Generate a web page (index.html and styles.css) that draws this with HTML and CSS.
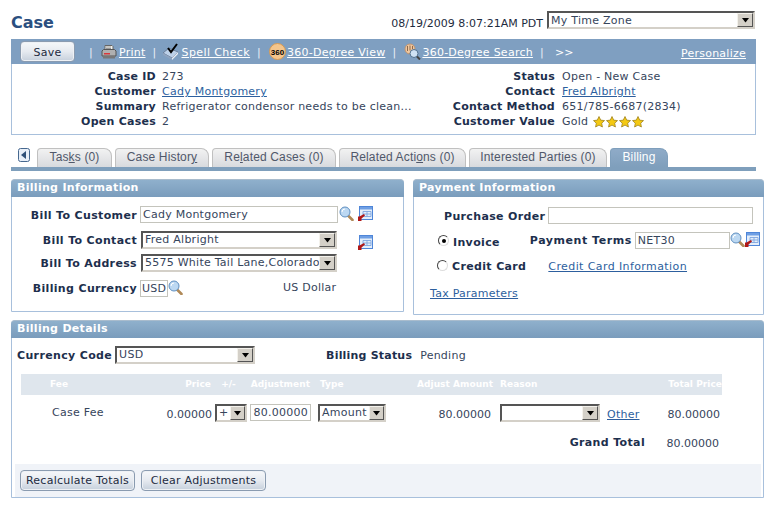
FILE: index.html
```html
<!DOCTYPE html>
<html lang="en">
<head>
<meta charset="utf-8">
<title>Case</title>
<link rel="stylesheet" href="styles.css">
</head>
<body>
<svg class="defs" width="0" height="0" aria-hidden="true">
  <defs>
    <symbol id="mag" viewBox="0 0 15 15">
      <path d="M9 9.500l4.500 4.500" stroke="#b08a58" stroke-width="2.600" stroke-linecap="round"/>
      <circle cx="6" cy="6" r="5" fill="#bcd8f2" stroke="#5f8fc0"/>
      <path d="M3 6a3 3 0 0 1 3-3" stroke="#fff" fill="none"/>
    </symbol>
    <symbol id="lookup" viewBox="0 0 15 15">
      <rect x="1.500" y=".5" width="13" height="13" fill="#e4eefa" stroke="#4f86d8"/>
      <rect x="2" y="1" width="12" height="2.500" fill="#6f9fe4"/>
      <path d="M5 5.500h8v5h-8zM5 8h8M9 5.500v5" fill="none" stroke="#7fa6e0" stroke-width=".9"/>
      <path d="M0 15V10.500h1.500L6 8l1 1.500L3.500 12.500V15z" fill="#b01818"/>
    </symbol>
    <symbol id="star" viewBox="0 0 12 12">
      <path d="M6 .5l1.700 3.600 3.800.5-2.800 2.600.7 3.800L6 9.100 2.600 11l.7-3.800L.5 4.600l3.800-.5z" fill="#f4c912" stroke="#a08320" stroke-width=".8"/>
    </symbol>
    <symbol id="arrow" viewBox="0 0 9 5">
      <path d="M1 0h7L4.500 4.500z" fill="#000"/>
    </symbol>
  </defs>
</svg>

<div class="page">
  <header class="titlebar">
    <h1 class="title">Case</h1>
    <div class="tz">
      <span class="stamp">08/19/2009 8:07:21AM PDT</span>
      <div class="sel sel-tz"><span class="sel-text">My Time Zone</span><span class="sel-btn"><svg width="9" height="5"><use href="#arrow"/></svg></span></div>
    </div>
  </header>

  <nav class="toolbar">
    <button class="btn btn-save" type="button">Save</button>
    <span class="sep first">|</span>
    <svg class="tool-ico" width="16" height="16" viewBox="0 0 16 16"><path d="M4 6V1.500h7l1 1V6z" fill="#f4f4ee" stroke="#666"/><path d="M5 3h5M5 4.500h5" stroke="#999"/><path d="M1 7l1.500-1.500h11L15 7v5H1z" fill="#b0b0b0" stroke="#555"/><rect x="3" y="9" width="6" height="1.500" fill="#d8383c"/><path d="M2 12h12v2.500H2z" fill="#777"/></svg>
    <a class="tool-link" href="#">Print</a>
    <span class="sep">|</span>
    <svg class="tool-ico ico-spell" width="18" height="18" viewBox="0 0 18 18"><path d="M1 10l6-5 9 4-6 6z" fill="#bcd0e8" stroke="#6b7f9a"/><path d="M1 10v2l9 5v-2z" fill="#8fa4c0"/><path d="M10 15v2l6-6V9z" fill="#e8eef6"/><path d="M6 5l3 4 6-8" fill="none" stroke="#000" stroke-width="2"/></svg>
    <a class="tool-link spell" href="#">Spell Check</a>
    <span class="sep">|</span>
    <svg class="tool-ico" width="17" height="17" viewBox="0 0 17 17"><circle cx="8.500" cy="8.500" r="8" fill="#f4c58c" stroke="#d69a54"/><text x="8.500" y="11.500" text-anchor="middle" class="ico-360">360</text></svg>
    <a class="tool-link tight" href="#">360-Degree View</a>
    <span class="sep">|</span>
    <svg class="tool-ico" width="17" height="17" viewBox="0 0 17 17"><circle cx="6" cy="6" r="5" fill="#f0c8a0" stroke="#c09470"/><path d="M3.500 3v5M6 2.500v5M8.500 3v3" stroke="#8f6a4a"/><circle cx="10" cy="10.500" r="4" fill="#cfe2f4" stroke="#50708f"/><path d="M13 13.500l3 3" stroke="#444" stroke-width="2"/></svg>
    <a class="tool-link tight" href="#">360-Degree Search</a>
    <span class="sep">|</span>
    <span class="more">&gt;&gt;</span>
    <a class="tool-link personalize" href="#">Personalize</a>
  </nav>

  <section class="summary">
    <dl class="kv kv-left">
      <dt>Case ID</dt><dd>273</dd>
      <dt>Customer</dt><dd><a href="#">Cady Montgomery</a></dd>
      <dt>Summary</dt><dd>Refrigerator condensor needs to be clean...</dd>
      <dt>Open Cases</dt><dd>2</dd>
    </dl>
    <dl class="kv kv-right">
      <dt>Status</dt><dd>Open - New Case</dd>
      <dt>Contact</dt><dd><a href="#">Fred Albright</a></dd>
      <dt>Contact Method</dt><dd>651/785-6687(2834)</dd>
      <dt>Customer Value</dt><dd class="stars">Gold <svg width="12" height="12"><use href="#star"/></svg><svg width="12" height="12"><use href="#star"/></svg><svg width="12" height="12"><use href="#star"/></svg><svg width="12" height="12"><use href="#star"/></svg></dd>
    </dl>
  </section>

  <div class="tabs">
    <span class="tab-back"><svg width="12" height="14" viewBox="0 0 12 14"><rect x=".5" y=".5" width="11" height="13" rx="2" fill="#e8eff8" stroke="#46688f"/><path d="M8 3v8L3 7z" fill="#2f5078"/></svg></span>
    <span class="tab t1">Tas<u>k</u>s (0)</span>
    <span class="tab t2">Case Histor<u>y</u></span>
    <span class="tab t3">Re<u>l</u>ated Cases (0)</span>
    <span class="tab t4">Related Acti<u>o</u>ns (0)</span>
    <span class="tab t5">Interested Parties (0)</span>
    <span class="tab active">Billing</span>
  </div>

  <div class="panels">
    <section class="panel p-billing">
      <h2 class="panel-head">Billing Information</h2>
      <div class="bill-grid">
        <label class="lbl r1">Bill To Customer</label>
        <div class="field r1"><span class="inp w-cust">Cady Montgomery</span><svg class="mag" width="15" height="15"><use href="#mag"/></svg><svg class="lk" width="15" height="15"><use href="#lookup"/></svg></div>
        <label class="lbl r2">Bill To Contact</label>
        <div class="field r2"><div class="sel w-contact"><span class="sel-text">Fred Albright</span><span class="sel-btn"><svg width="9" height="5"><use href="#arrow"/></svg></span></div><svg class="lk lk2" width="15" height="15"><use href="#lookup"/></svg></div>
        <label class="lbl r3">Bill To Address</label>
        <div class="field r3"><div class="sel w-contact"><span class="sel-text">5575 White Tail Lane,Colorado</span><span class="sel-btn"><svg width="9" height="5"><use href="#arrow"/></svg></span></div></div>
        <label class="lbl r4">Billing Currency</label>
        <div class="field r4"><span class="inp w-usd">USD</span><svg width="15" height="15"><use href="#mag"/></svg><span class="usd-name">US Dollar</span></div>
      </div>
    </section>

    <section class="panel p-payment">
      <h2 class="panel-head">Payment Information</h2>
      <div class="pay-body">
        <div class="pay-row po"><label class="lbl">Purchase Order</label><span class="inp w-po"></span></div>
        <div class="pay-row inv">
          <span class="radio on"></span><label class="lbl radio-l">Invoice</label>
          <label class="lbl terms">Payment Terms</label><span class="inp w-net">NET30</span><svg width="15" height="15"><use href="#mag"/></svg><svg width="15" height="15"><use href="#lookup"/></svg>
        </div>
        <div class="pay-row cc">
          <span class="radio"></span><label class="lbl radio-l">Credit Card</label>
          <a class="cc-link" href="#">Credit Card Information</a>
        </div>
        <div class="pay-row tax"><a href="#">Tax Parameters</a></div>
      </div>
    </section>
  </div>

  <section class="panel p-details">
    <h2 class="panel-head">Billing Details</h2>
    <div class="cur-row">
      <label class="lbl">Currency Code</label>
      <div class="sel w-cur"><span class="sel-text">USD</span><span class="sel-btn"><svg width="9" height="5"><use href="#arrow"/></svg></span></div>
      <label class="lbl status-l">Billing Status</label><span class="status-v">Pending</span>
    </div>
    <table class="fees">
      <colgroup>
        <col class="c-fee"><col class="c-price"><col class="c-sign"><col class="c-adj"><col class="c-type"><col class="c-amt"><col class="c-reason"><col class="c-total">
      </colgroup>
      <thead>
        <tr>
          <th class="l fee-h">Fee</th><th class="r price-h">Price</th><th class="c sign-h">+/-</th><th class="r adj-h">Adjustment</th><th class="l type-h">Type</th><th class="r amt-h">Adjust Amount</th><th class="l reason-h">Reason</th><th class="r">Total Price</th>
        </tr>
      </thead>
      <tbody>
        <tr class="row-fee">
          <td class="fee-name">Case Fee</td>
          <td class="r val">0.00000</td>
          <td class="ctl"><div class="sel w-sign"><span class="sel-text">+</span><span class="sel-btn"><svg width="9" height="5"><use href="#arrow"/></svg></span></div></td>
          <td class="ctl"><span class="inp w-adj">80.00000</span></td>
          <td class="ctl"><div class="sel w-type"><span class="sel-text">Amount</span><span class="sel-btn"><svg width="9" height="5"><use href="#arrow"/></svg></span></div></td>
          <td class="r val amt">80.00000</td>
          <td class="ctl"><div class="reason-cell"><div class="sel w-reason"><span class="sel-text"></span><span class="sel-btn"><svg width="9" height="5"><use href="#arrow"/></svg></span></div><a class="other" href="#">Other</a></div></td>
          <td class="r val tot">80.00000</td>
        </tr>
        <tr class="row-total">
          <td colspan="6"></td>
          <td class="gt">Grand Total</td>
          <td class="r gv">80.00000</td>
        </tr>
      </tbody>
    </table>
    <div class="actions">
      <button class="btn btn-a1" type="button">Recalculate Totals</button>
      <button class="btn btn-a2" type="button">Clear Adjustments</button>
    </div>
  </section>
</div>
</body>
</html>
```
FILE: styles.css
```css
* { box-sizing: border-box; }
html, body { margin: 0; padding: 0; background: #fff; }
body { font: 11px/15px "DejaVu Sans", Verdana, sans-serif; letter-spacing: .25px; color: #36455c; width: 774px; height: 505px; overflow: hidden; }
a { color: #2d5f9e; }
.defs { position: absolute; }
svg { display: block; flex: none; }
.page { padding-left: 11px; width: 774px; }

/* title */
.titlebar { height: 39px; width: 745px; display: flex; justify-content: space-between; }
.title { margin: 13px 0 0; font-size: 16px; line-height: 20px; font-weight: bold; letter-spacing: 0; color: #2b4f7f; }
.tz { display: flex; margin-top: 11px; align-items: flex-start; justify-content: flex-end; gap: 4px; padding-right: 1px; }
.stamp { font-size: 11px; line-height: 15px; letter-spacing: 0; margin-top: 5px; white-space: nowrap; color: #1d2b40; }

/* selects and inputs */
.sel { display: flex; justify-content: space-between; height: 18px; background: #fff; border: 2px solid; border-color: #555 #d4d0c8 #d4d0c8 #555; font-size: 11px; line-height: 14px; color: #36455c; overflow: hidden; white-space: nowrap; }
.sel-text { padding-left: 2px; overflow: hidden; }
.sel-btn { width: 16px; flex: none; background: #d4d0c8; border: 1px solid; border-color: #f4f2ec #555 #555 #f4f2ec; display: flex; align-items: center; justify-content: center; }
.sel-tz { width: 208px; }
.sel-tz .sel-text { padding-top: 1px; line-height: 13px; }
.inp { display: block; height: 17px; background: #fff; border: 1px solid #c4c4bc; padding: 0 2px; line-height: 16px; white-space: nowrap; overflow: hidden; color: #36455c; }

/* toolbar */
.toolbar { width: 745px; height: 25px; background: #7f9fc1; display: flex; align-items: center; color: #fff; padding-left: 9px; }
.tool-link { color: #fff; margin: 2px 0 0 2px; }
.tool-link.tight { margin-left: 1px; }
.tool-link.spell { letter-spacing: .4px; }
.sep { margin: 2px 8px 0 7px; color: #e8eef6; }
.sep.first { margin: 2px 8px 0 14px; }
.ico-spell { margin-left: -3px; }
.more { margin: 2px 0 0 3px; }
.personalize { margin-left: auto; margin-right: 10px; margin-top: 4px; }
.ico-360 { font: bold 8px "Liberation Sans", sans-serif; letter-spacing: 0; fill: #000; }
.btn { font: 11px/15px "DejaVu Sans", Verdana, sans-serif; letter-spacing: .25px; color: #1d2b40; border: 1px solid #8a9bb0; border-radius: 4px; background: linear-gradient(#f6f8fa 0%, #e6eaf0 50%, #c6d0dc 100%); padding: 1px 0 0; height: 21px; box-shadow: inset 0 0 0 1px #eef1f5; }
.btn-save { width: 55px; }

/* summary */
.summary { width: 745px; height: 71px; border: 1px solid #a8c0dc; border-top: 0; display: flex; padding-top: 5px; }
.kv { margin: 0; display: grid; grid-auto-rows: 15px; column-gap: 6px; align-content: start; }
.kv dt { font-weight: bold; letter-spacing: .25px; text-align: right; color: #1d2f4d; }
.kv dd { margin: 0; white-space: nowrap; }
.kv-left { grid-template-columns: 144px 1fr; width: 400px; }
.kv-right { grid-template-columns: 143px 1fr; column-gap: 7px; }
.stars { display: flex; align-items: center; gap: 1px; }
.stars svg:first-of-type { margin-left: 4px; }

/* tabs */
.tabs { width: 745px; height: 36px; padding: 13px 0 0 7px; display: flex; gap: 3px; border-bottom: 4px solid #7f9fbc; align-items: flex-end; font: 12px/14px "Liberation Sans", Arial, sans-serif; letter-spacing: .15px; }
.tab { height: 19px; display: block; padding: 1px 0 0; text-align: center; background: linear-gradient(#f2f2f2, #d8dade); border: 1px solid #c0c0c0; border-bottom: 0; border-radius: 4px 8px 0 0; color: #50586a; }
.tab-back { width: 12px; align-self: flex-start; margin: 0 4px 0 0; }
.t1 { width: 75px; } .t2 { width: 94px; } .t3 { width: 124px; } .t4 { width: 127px; } .t5 { width: 138px; }
.active { width: 58px; background: linear-gradient(#8fabc8, #7f9fbc); border-color: #7f9fbc; color: #fff; }

/* panels */
.panels { display: flex; gap: 9px; margin-top: 8px; align-items: flex-start; }
.panel { border: 1px solid #a8c0dc; border-radius: 4px 4px 0 0; background: #fff; }
.panel-head { margin: -1px -1px 0; height: 18px; font-size: 11px; line-height: 15px; font-weight: bold; letter-spacing: .3px; color: #fff; padding-left: 6px; background: linear-gradient(#8fb0cc, #7a9cbc); border-radius: 4px 4px 0 0; border-top: 1px solid #a9bccd; }
.lbl { font-weight: bold; letter-spacing: .35px; color: #1d2f4d; white-space: nowrap; }
.p-billing { width: 393px; height: 133px; }
.p-payment { width: 351px; height: 136px; }

.bill-grid { display: grid; grid-template-columns: 125px 1fr; column-gap: 3px; grid-template-rows: 25px 23px 26px 20px; padding-top: 9px; }
.bill-grid .lbl { text-align: right; padding-top: 2px; }
.bill-grid .lbl.r4 { padding-top: 1px; }
.field { display: flex; align-items: flex-start; position: relative; }
.field.r2, .field.r3 { padding-left: 1px; }
.w-cust { width: 198px; }
.mag { margin: 0 0 0 1px; }
.lk { margin-left: 4px; }
.lk2 { margin: 4px 0 0 21px; }
.w-contact { width: 196px; }
.w-usd { width: 28px; padding: 0 1px; }
.usd-name { margin-left: 100px; }

.pay-body { padding-top: 10px; position: relative; }
.pay-row { display: flex; align-items: flex-start; }
.po { height: 25px; padding-left: 30px; }
.po .lbl { margin-right: 3px; padding-top: 2px; }
.w-po { width: 205px; }
.inv { height: 27px; padding-left: 24px; }
.radio { width: 11px; height: 11px; border-radius: 50%; border: 1px solid; border-color: #444 #ddd #ddd #444; background: #fff; margin-top: 3px; position: relative; flex: none; }
.radio.on::after { content: ""; position: absolute; left: 3px; top: 3px; width: 4px; height: 4px; border-radius: 50%; background: #000; }
.radio-l { margin-left: 4px; padding-top: 3px; }
.terms { margin-left: 30px; margin-right: 3px; padding-top: 1px; letter-spacing: .55px; }
.w-net { width: 95px; }
.cc { height: 27px; padding-left: 23px; }
.cc .radio { margin-top: 1px; }
.cc .radio-l { padding-top: 0; }
.cc-link { margin-left: 22px; letter-spacing: .4px; }
.tax { padding-left: 16px; }

/* details */
.p-details { width: 753px; height: 178px; margin-top: 5px; position: relative; }
.cur-row { display: flex; align-items: flex-start; padding: 8px 0 0 5px; height: 36px; }
.cur-row .lbl { padding-top: 2px; }
.w-cur { width: 140px; margin-left: 3px; }
.status-l { margin-left: 71px; letter-spacing: .2px; }
.status-v { margin-left: 8px; padding-top: 2px; }
.fees { margin-left: 9px; width: 701px; border-collapse: collapse; table-layout: fixed; }
.fees th { height: 21px; background: #dfe6ed; color: #fff; font-size: 9px; letter-spacing: .05px; font-weight: bold; padding: 0; white-space: nowrap; }
.fees td { padding: 0; white-space: nowrap; vertical-align: top; }
.l { text-align: left; } .r { text-align: right; } .c { text-align: center; }
.c-fee { width: 139px; } .c-price { width: 52px; } .c-sign { width: 37px; } .c-adj { width: 68px; } .c-type { width: 73px; } .c-amt { width: 106px; } .c-reason { width: 149px; } .c-total { width: 77px; }
.fees .fee-h { padding-left: 29px; }
.fees .price-h { padding-right: 1px; }
.fees .sign-h { padding-right: 4px; }
.fees .adj-h { padding-right: 7px; }
.fees .type-h { padding-left: 3px; }
.fees .amt-h { padding-right: 3px; }
.fees .reason-h { padding-left: 4px; }
.row-fee { height: 38px; }
.row-total { height: 22px; }
.fees .fee-name { padding: 10px 0 0 31px; }
.fees .val { padding-top: 12px; letter-spacing: 0; }
.fees .ctl { padding-top: 9px; }
.w-sign { width: 32px; margin-left: 3px; }
.w-sign .sel-btn, .w-type .sel-btn { width: 15px; }
.w-adj { width: 61px; margin-left: 1px; text-align: right; }
.w-type { width: 68px; margin-left: 1px; }
.fees .amt { padding-right: 5px; }
.fees .tot { padding-right: 2px; }
.reason-cell { display: flex; align-items: flex-start; gap: 7px; padding-left: 4px; }
.w-reason { width: 100px; }
.other { padding-top: 3px; }
.fees .gt { font-weight: bold; letter-spacing: .35px; color: #1d2f4d; text-align: right; padding-top: 2px; }
.fees .gv { padding: 3px 3px 0 0; letter-spacing: 0; }
.actions { position: absolute; left: 3px; right: 2px; bottom: 0; height: 33px; background: #f0f3f8; display: flex; gap: 6px; padding: 6px 0 0 5px; }
.actions .btn { padding-top: 0; }
.btn-a1 { width: 115px; }
.btn-a2 { width: 125px; }
```
